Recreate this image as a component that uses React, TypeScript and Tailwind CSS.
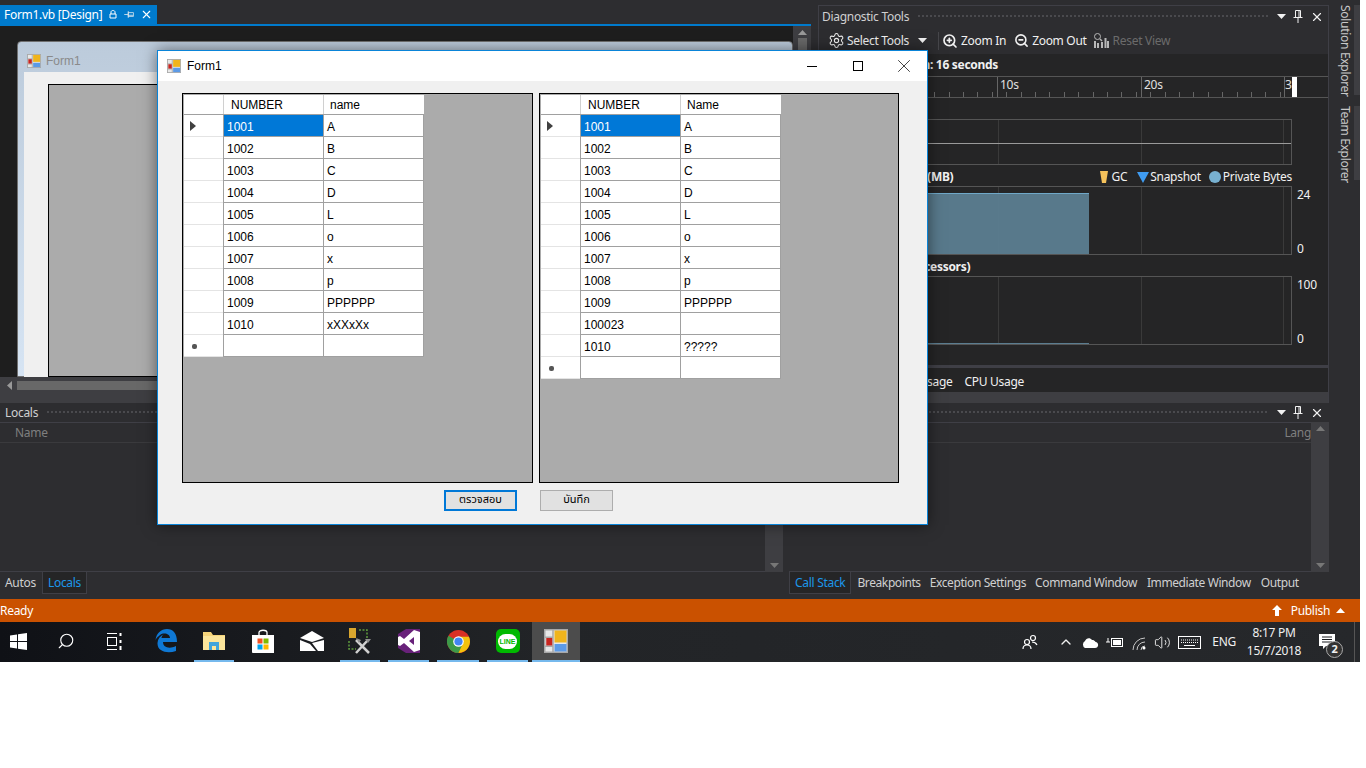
import { ChevronUp, Search, X, Volume2, Settings, ZoomIn, ZoomOut } from "lucide-react";

const FormIcon = ({ size = 16 }: { size?: number }) => (
  <svg width={size} height={size} viewBox="0 0 16 16" className="shrink-0">
    <rect x="0.5" y="0.5" width="15" height="15" fill="#e8e8e8" stroke="#a8a8a8" />
    <path d="M0.5 5.5H6M6 0.5V15.5M0.5 11.5H6" stroke="#a8a8a8" fill="none" />
    <rect x="1.500" y="6" width="4" height="5" fill="#c8251f" />
    <rect x="7" y="1" width="8" height="8" fill="#f0b41c" />
    <rect x="7" y="10" width="8" height="5" fill="#5c9ae6" />
  </svg>
);

const Caret = ({ color = "#f1f1f1" }: { color?: string }) => (
  <svg width="9" height="5" viewBox="0 0 9 5" className="shrink-0">
    <path d="M0 0H9L4.5 5Z" fill={color} />
  </svg>
);

const PinIcon = ({ className = "" }: { className?: string }) => (
  <svg width="10" height="13" viewBox="0 0 10 13" fill="none" stroke="#f1f1f1" className={className}>
    <path d="M2.500 0.500H7.500V7.500H2.500ZM6 1V7M0.500 7.500H9.500M5 8V13" />
  </svg>
);

const PanelButtons = () => (
  <div className="flex items-center gap-[7px] text-[#f1f1f1] shrink-0">
    <Caret />
    <PinIcon />
    <X size={14} strokeWidth={2} />
  </div>
);

const Dots = () => (
  <div className="flex-1 h-[5px] mx-2 bg-[radial-gradient(#4a4a4e_1px,transparent_1px)] bg-[length:4px_4px]" />
);

const left = [
  ["1001", "A"], ["1002", "B"], ["1003", "C"], ["1004", "D"], ["1005", "L"],
  ["1006", "o"], ["1007", "x"], ["1008", "p"], ["1009", "PPPPPP"], ["1010", "xXXxXx"],
];
const right = [
  ["1001", "A"], ["1002", "B"], ["1003", "C"], ["1004", "D"], ["1005", "L"],
  ["1006", "o"], ["1007", "x"], ["1008", "p"], ["1009", "PPPPPP"], ["100023", ""], ["1010", "?????"],
];

const GridRow = ({ a, b, current, isNew }: { a: string; b: string; current?: boolean; isNew?: boolean }) => (
  <div className="flex h-[22px]">
    <div className="w-[39px] flex items-center pl-[6px] border-b border-b-[#e4e4e4] bg-white">
      {current && (
        <svg width="6" height="10" viewBox="0 0 6 10"><path d="M0 0L6 5L0 10Z" fill="#404040" /></svg>
      )}
      {isNew && <span className="ml-[2px] mt-[2px] w-[5px] h-[5px] rounded-[2px] bg-[#555]" />}
    </div>
    <div className={`w-[100px] flex items-center pl-[3px] pt-[2px] border-l border-b border-[#a0a0a0] ${current ? "bg-[#0078d7] text-white" : "bg-white text-black"}`}>
      {a}
    </div>
    <div className="w-[101px] flex items-center pl-[3px] pt-[2px] border-x border-b border-[#a0a0a0] bg-white text-black">
      {b}
    </div>
  </div>
);

const DataGrid = ({ rows, second, width }: { rows: string[][]; second: string; width: string }) => (
  <div className={`${width} h-[390px] border border-black bg-[#ababab] p-px`}>
    <div className="w-[240px]">
      <div className="flex h-[19px]">
        <div className="w-[40px] bg-white border-r border-[#d0d0d0]" />
        <div className="w-[100px] bg-white border-r border-[#d0d0d0] flex items-center pl-[7px] text-black">NUMBER</div>
        <div className="w-[100px] bg-white flex items-center pl-[6px] text-black">{second}</div>
      </div>
      <div className="border-t border-[#a0a0a0]">
        {rows.map((r, i) => (
          <GridRow key={i} a={r[0]} b={r[1]} current={i === 0} />
        ))}
        <GridRow a="" b="" isNew />
      </div>
    </div>
  </div>
);

const Chart = ({ h, children }: { h: string; children?: React.ReactNode }) => (
  <div className={`${h} ml-[8px] w-[465px] border border-[#555] relative flex shrink-0`}>
    <div className="w-[170px]" />
    <div className="w-[143px] border-l border-[#3a3a3a]" />
    <div className="w-[143px] border-x border-[#3a3a3a]" />
    {children}
  </div>
);

const WinLogo = () => (
  <svg width="17" height="17" viewBox="0 0 17 17"><path d="M0 2.5L7 1.5V8H0ZM8 1.3L17 0V8H8ZM0 9H7V15.5L0 14.5ZM8 9H17V17L8 15.7Z" fill="#fff" /></svg>
);
const TaskView = () => (
  <svg width="16" height="17" viewBox="0 0 16 17" fill="none" stroke="#fff">
    <path d="M1 0.5H11M1 16.5H11" />
    <rect x="1.5" y="4.5" width="9" height="8" />
    <path d="M14.5 0V3M14.5 7V10M14.5 13V17" strokeWidth="2" />
  </svg>
);
const EdgeIcon = () => (
  <svg width="22" height="24" viewBox="0 0 22 24">
    <path d="M0.5 11C1.5 4 6 0 12 0C18 0 22 4 22 13H8C8 19 15 20 21 17V22C13 25 2 23 2.5 14C2.7 10 5 7 9 5C7 6.500 6.500 8 6.500 9H15C15 5 9 3 5 6C3 7.500 1.500 9 0.500 11Z" fill="#0f78d4" />
  </svg>
);
const FolderIcon = () => (
  <svg width="22" height="20" viewBox="0 0 22 20">
    <path d="M0 1H8L10 4H22V19H0Z" fill="#f5d47a" />
    <path d="M0 5H22V19H0Z" fill="#fbe59b" />
    <path d="M6 11H16V19H13V15H9V19H6Z" fill="#3fa4dc" />
  </svg>
);
const StoreIcon = () => (
  <svg width="22" height="25" viewBox="0 0 22 25">
    <path d="M7 6V3.500C7 0.500 15 0.500 15 3.500V6" fill="none" stroke="#fff" strokeWidth="1.300" />
    <path d="M0 6H22V24H1C0.500 24 0 23.500 0 23Z" fill="#fff" />
    <rect x="5.500" y="9.500" width="5" height="5" fill="#f25022" />
    <rect x="11.500" y="9.500" width="5" height="5" fill="#7fba00" />
    <rect x="5.500" y="15.500" width="5" height="5" fill="#00a4ef" />
    <rect x="11.500" y="15.500" width="5" height="5" fill="#ffb900" />
  </svg>
);
const MailIcon = () => (
  <svg width="24" height="20" viewBox="0 0 24 20">
    <path d="M12 0L24 7L12 11L0 7Z" fill="#fff" />
    <path d="M0 9L10 13L16 20H0ZM24 9V20H18L12 12Z" fill="#fff" />
  </svg>
);
const ToolsIcon = () => (
  <svg width="24" height="26" viewBox="0 0 24 26">
    <rect x="1" y="0" width="7" height="10" fill="#d9a62e" />
    <path d="M11 2H19V12M1 13V21H8" fill="none" stroke="#5f9a3d" strokeWidth="1.500" strokeDasharray="2 1.500" />
    <path d="M8 12L21 25M20 12L8 25" stroke="#d0d0d0" strokeWidth="2.500" />
    <path d="M8 10L13 12L11 15ZM17 11H23L20 15Z" fill="#909090" />
  </svg>
);
const VsIcon = () => (
  <svg width="22" height="24" viewBox="0 0 22 24">
    <path d="M0 5L8 0H22V24H8L0 19Z" fill="#68217a" />
    <path d="M16 1L22 3V21L16 23L6 14L2 17L0 16V8L2 7L6 10Z" fill="#fff" />
    <path d="M16 8L11 12L16 16Z" fill="#68217a" />
  </svg>
);
const ChromeIcon = () => (
  <svg width="23" height="23" viewBox="0 0 24 24">
    <circle cx="12" cy="12" r="12" fill="#d93025" />
    <path d="M12 12L1.600 6A12 12 0 0 0 12 24L18 13Z" fill="#3c9a48" />
    <path d="M12 7H22.900A12 12 0 0 1 12 24L17 13Z" fill="#f4c20d" />
    <circle cx="12" cy="12" r="5.500" fill="#fff" />
    <circle cx="12" cy="12" r="4.300" fill="#4285f4" />
  </svg>
);
const LineIcon = () => (
  <div className="w-[24px] h-[24px] rounded-[5px] bg-[#00b900] flex items-center justify-center">
    <div className="w-[19px] h-[15px] rounded-full bg-white text-[#00b900] text-[7px] leading-[15px] font-bold text-center font-['Liberation_Sans',sans-serif] tracking-normal">LINE</div>
  </div>
);
const ResetIcon = () => (
  <svg width="16" height="17" viewBox="0 0 16 17" fill="none" stroke="#b8b8b8" className="shrink-0">
    <circle cx="4.500" cy="4.500" r="3" />
    <path d="M7 7L9 9" strokeWidth="1.500" />
    <path d="M2 9V16M5 11V16M9 10V16M12.500 6V16M15 9V16" strokeWidth="2" />
  </svg>
);
const WifiIcon = () => (
  <svg width="15" height="15" viewBox="0 0 15 15" fill="none" stroke="#c8c8c8" className="mr-[8px] -scale-x-100">
    <path d="M1 7A8 8 0 0 1 9 15M1 3A12 12 0 0 1 13 15M1 11A4 4 0 0 1 5 15" />
    <circle cx="2" cy="13" r="1.500" fill="#fff" stroke="none" />
  </svg>
);

const TaskItem = ({ w, children, run, active }: { w: string; children: React.ReactNode; run?: boolean; active?: boolean }) => (
  <div className={`${w} h-full flex flex-col ${active ? "bg-[#4c4c4c]" : ""}`}>
    <div className="flex-1 flex items-center justify-center">{children}</div>
    <div className={`h-[2px] ${active ? "" : "mx-[4px]"} ${run ? "bg-[#76b9ed]" : ""}`} />
  </div>
);

export default function App() {
  return (
    <div className="relative w-[1366px] h-[768px] bg-white overflow-hidden font-['Noto_Sans',sans-serif] text-[12px] tracking-[-0.3px]">
      <div className="w-[1360px] h-[662px] flex flex-col bg-[#2d2d30]">
        <div className="h-[599px] flex">
          <div className="w-[1329px] shrink-0 flex flex-col">
            {/* top half */}
            <div className="h-[403px] flex">
              <div className="w-[811px] shrink-0 flex flex-col">
                <div className="h-[24px] pt-[5px]">
                  <div className="w-[157px] h-[19px] bg-[#007acc] flex items-center pl-1 text-white whitespace-nowrap">
                    <span className="leading-none">Form1.vb [Design]</span>
                    <svg width="8" height="9" viewBox="0 0 8 9" className="ml-[7px]"><path d="M1 4H7V8H1ZM2 4V2C2 0 6 0 6 2V4" fill="none" stroke="#fff" /></svg>
                    <PinIcon className="rotate-90 scale-75 ml-[7px]" />
                    <X size={13} className="ml-[6px]" strokeWidth={2} />
                  </div>
                </div>
                <div className="h-[2px] bg-[#007acc]" />
                <div className="h-[351px] flex bg-[#1e1e1e]">
                  <div className="flex-1 pl-[17px] pt-[15px] overflow-hidden">
                    <div className="h-[336px] rounded-t-[4px] border border-[#707070] bg-[linear-gradient(#bccbdb,#d6e4f3)]">
                      <div className="h-[30px] flex items-center pl-[9px] pt-[8px] gap-[5px] text-[#8a8a8a] font-['Liberation_Sans',sans-serif] text-[12px] tracking-normal">
                        <FormIcon size={14} />Form1
                      </div>
                      <div className="h-[305px] ml-[6px] bg-[#f0f0f0] pl-[24px] pt-[12px]">
                        <div className="h-[293px] border border-black bg-[#ababab]" />
                      </div>
                    </div>
                  </div>
                  <div className="w-[18px] bg-[#3e3e42] flex flex-col items-center pt-[4px] gap-[3px]">
                    <svg width="9" height="5" viewBox="0 0 9 5"><path d="M0 5H9L4.500 0Z" fill="#999" /></svg>
                    <div className="w-[9px] h-[20px] bg-[#686868]" />
                  </div>
                </div>
                <div className="h-[26px] bg-[#3e3e42] flex items-start pt-[4px] pl-[7px] gap-[5px]">
                  <svg width="5" height="9" viewBox="0 0 5 9"><path d="M5 0V9L0 4.500Z" fill="#999" /></svg>
                  <div className="flex-1 h-[9px] bg-[#686868] mr-[40px]" />
                </div>
              </div>
              <div className="w-[7px] shrink-0" />
              <div className="flex-1 min-w-0 flex flex-col border border-[#3f3f46] border-b-0 mt-[5px] bg-[#252526] text-[#f1f1f1]">
                <div className="h-[21px] flex items-center pl-[3px] pr-[4px] text-[#d0d0d0] bg-[#2d2d30]">
                  Diagnostic Tools<Dots /><PanelButtons />
                </div>
                <div className="h-[27px] flex items-center pl-[9px] gap-[3px] bg-[#2d2d30]">
                  <Settings size={17} strokeWidth={1.500} />
                  <span className="-ml-px">Select Tools</span>
                  <span className="ml-[6px]"><Caret /></span>
                  <div className="w-px h-[18px] bg-[#46464a] ml-[8px]" />
                  <ZoomIn size={16} strokeWidth={2.500} /><span className="mr-[5px]">Zoom In</span>
                  <ZoomOut size={15} strokeWidth={2.500} /><span className="mr-[3px]">Zoom Out</span>
                  <ResetIcon /><span className="text-[#6b6b6b] ml-[1px]">Reset View</span>
                </div>
                <div className="h-[22px] flex items-center justify-end pr-[330px] font-bold whitespace-nowrap">
                  Diagnostics session: 16 seconds
                </div>
                <div className="h-[22px] border-y border-[#555] relative flex text-[#e0e0e0]">
                  <div className="w-[179px] border-r border-[#666]" />
                  <div className="w-[144px] border-r border-[#666] pl-[2px] leading-[16px]">10s</div>
                  <div className="w-[143px] border-r border-[#666] pl-[2px] leading-[16px]">20s</div>
                  <div className="w-[7px] overflow-hidden leading-[16px]">3</div>
                  <div className="w-[5px] bg-white" />
                  <div className="absolute left-[0px] w-[466px] bottom-0 h-[5px] bg-[repeating-linear-gradient(90deg,#666_0,#666_1px,transparent_1px,transparent_14.400px)]" />
                </div>
                <div className="h-[21px]" />
                <Chart h="h-[46px]">
                  <div className="absolute left-0 right-0 top-[23px] h-px bg-[#9a9a9a]" />
                </Chart>
                <div className="h-[21px] flex items-center pl-[11px] pt-[3px] w-[473px] shrink-0 whitespace-nowrap">
                  <span className="font-bold">Process Memory (MB)</span>
                  <div className="ml-auto flex items-center gap-[4px]">
                    <svg width="8" height="13" viewBox="0 0 8 13"><path d="M0 0H8L6 12H2Z" fill="#f5c25b" /></svg>
                    <span className="mr-[6px]">GC</span>
                    <svg width="12" height="11" viewBox="0 0 12 11"><path d="M0 0H12L6 11Z" fill="#3f9bf0" /></svg>
                    <span className="mr-[4px] -ml-[3px]">Snapshot</span>
                    <span className="w-[12px] h-[12px] rounded-full bg-[#78b1d1]" />
                    <span className="-ml-[2px]">Private Bytes</span>
                  </div>
                </div>
                <div className="flex">
                  <Chart h="h-[69px]">
                    <div className="absolute left-0 w-[261px] bottom-0 h-[61px] bg-[#5b7d90]/95 border-t border-[#6fa8c8]" />
                  </Chart>
                  <div className="h-[69px] ml-[5px] flex flex-col justify-between leading-[16px] pt-[1px]"><span>24</span><span className="translate-y-[2px]">0</span></div>
                </div>
                <div className="h-[21px] flex items-center pl-[12px] pt-[3px] font-bold whitespace-nowrap">CPU (% of all processors)</div>
                <div className="flex">
                  <Chart h="h-[69px]">
                    <div className="absolute left-0 w-[261px] bottom-0 h-[1px] bg-[#5b7d90]" />
                  </Chart>
                  <div className="h-[69px] ml-[5px] flex flex-col justify-between leading-[16px] pt-[1px]"><span>100</span><span className="translate-y-[2px]">0</span></div>
                </div>
                <div className="h-[20px]" />
                <div className="h-[3px] bg-[#3f3f46]" />
                <div className="h-[24px] flex items-center justify-end pt-[3px] pr-[304px] gap-[12px] whitespace-nowrap bg-[#252526]">
                  <span>Memory Usage</span><span>CPU Usage</span>
                </div>
                <div className="h-[11px] bg-[#3e3e42]" />
              </div>
            </div>
            {/* bottom half */}
            <div className="flex-1 flex">
              <div className="w-[783px] shrink-0 flex flex-col text-[#d0d0d0]">
                <div className="h-[19px] flex items-center pl-[5px]">Locals<Dots /></div>
                <div className="flex-1 flex">
                  <div className="flex-1 border-t border-b border-[#3f3f46]">
                    <div className="h-[20px] pl-[15px] flex items-center border-b border-[#3a3a3d] text-[#7f7f7f]">Name</div>
                  </div>
                  <div className="w-[18px] bg-[#3e3e42] flex flex-col items-center justify-end pb-[4px]">
                    <Caret color="#777" />
                  </div>
                </div>
                <div className="h-[27px] flex items-start pl-[1px]">
                  <span className="h-[20px] mt-[1px] px-[4px] flex items-center">Autos</span>
                  <span className="h-[22px] px-[5px] ml-[2px] flex items-center text-[#1c97ea] bg-[#252526] border border-t-0 border-[#3f3f46]">Locals</span>
                </div>
              </div>
              <div className="w-[6px] shrink-0" />
              <div className="flex-1 min-w-0 flex flex-col text-[#d0d0d0]">
                <div className="h-[19px] flex items-center pl-[5px]">Call Stack<Dots /><span className="mr-[5px]"><PanelButtons /></span></div>
                <div className="flex-1 flex">
                  <div className="flex-1 border-t border-b border-[#3f3f46]">
                    <div className="h-[20px] flex items-center justify-end border-b border-[#3a3a3d] text-[#7f7f7f]">Lang</div>
                  </div>
                  <div className="w-[18px] bg-[#3e3e42] flex flex-col items-center justify-between py-[4px]">
                    <svg width="9" height="5" viewBox="0 0 9 5"><path d="M0 5H9L4.500 0Z" fill="#777" /></svg>
                    <Caret color="#777" />
                  </div>
                </div>
                <div className="h-[27px] flex items-start gap-[10px] whitespace-nowrap tracking-[-0.4px]">
                  <span className="h-[22px] px-[5px] flex items-center text-[#1c97ea] bg-[#252526] border border-t-0 border-[#3f3f46] tracking-[-0.3px]">Call Stack</span>
                  <span className="h-[20px] mt-[1px] -ml-[4px] flex items-center">Breakpoints</span>
                  <span className="h-[20px] mt-[1px] -ml-[1px] flex items-center">Exception Settings</span>
                  <span className="h-[20px] mt-[1px] -ml-[1px] flex items-center">Command Window</span>
                  <span className="h-[20px] mt-[1px] flex items-center">Immediate Window</span>
                  <span className="h-[20px] mt-[1px] flex items-center">Output</span>
                </div>
              </div>
            </div>
          </div>
          <div className="flex-1 flex gap-[11px] flex-col pt-[5px] text-[#c8c8c8] whitespace-nowrap">
            <div className="h-[90px] flex justify-between pl-[7px]">
              <span className="[writing-mode:vertical-rl]">Solution Explorer</span>
              <div className="w-[6px] bg-[#3e3e42]" />
            </div>
            <div className="h-[74px] flex justify-between pl-[7px]">
              <span className="[writing-mode:vertical-rl]">Team Explorer</span>
              <div className="w-[6px] bg-[#3e3e42]" />
            </div>
          </div>
        </div>
        <div className="h-[23px] bg-[#ca5100] text-white flex items-center justify-between pr-[15px]">
          <span>Ready</span>
          <div className="flex items-center gap-[6px]">
            <svg width="10" height="11" viewBox="0 0 10 11"><path d="M5 0L10 5H7V11H3V5H0Z" fill="#fff" /></svg>
            <span className="ml-[3px]">Publish</span>
            <svg width="9" height="5" viewBox="0 0 9 5"><path d="M0 5H9L4.500 0Z" fill="#fff" /></svg>
          </div>
        </div>
        <div className="h-[40px] bg-[linear-gradient(90deg,#0f1116,#222427_40%,#26282b)] flex items-center text-white">
          <TaskItem w="w-[36px]"><WinLogo /></TaskItem>
          <TaskItem w="w-[60px]"><Search size={18} strokeWidth={1.500} className="-scale-x-100" /></TaskItem>
          <TaskItem w="w-[36px]"><TaskView /></TaskItem>
          <div className="w-[10px]" />
          <TaskItem w="w-[48px]"><EdgeIcon /></TaskItem>
          <TaskItem w="w-[48px]" run><FolderIcon /></TaskItem>
          <TaskItem w="w-[49px]"><StoreIcon /></TaskItem>
          <TaskItem w="w-[49px]"><MailIcon /></TaskItem>
          <TaskItem w="w-[48px]" run><ToolsIcon /></TaskItem>
          <TaskItem w="w-[49px]" run><VsIcon /></TaskItem>
          <TaskItem w="w-[50px]" run><ChromeIcon /></TaskItem>
          <TaskItem w="w-[49px]" run><LineIcon /></TaskItem>
          <TaskItem w="w-[48px]" run active><FormIcon size={24} /></TaskItem>
          <div className="flex-1 flex items-center justify-end text-[#f0f0f0] h-full">
            <svg width="16" height="16" viewBox="0 0 16 16" fill="none" stroke="#fff" strokeWidth="1.200" className="mr-[20px]">
              <circle cx="11" cy="4" r="2.500" /><circle cx="5" cy="8" r="2.500" /><path d="M1 15C1 12 3 11 5 11S9 12 9 15M10 8C12 8 14 9 15 11" />
            </svg>
            <ChevronUp size={16} className="mr-[7px]" />
            <svg width="18" height="11" viewBox="0 0 18 11" className="mr-[7px]"><path d="M4 11A4 4 0 0 1 4 4C5 1 9 0 11 3C14 3 14 5 15 5C18 6 18 11 14 11Z" fill="#fff" /></svg>
            <svg width="17" height="11" viewBox="0 0 17 11" fill="none" stroke="#fff" className="mr-[8px]"><rect x="5.500" y="1.500" width="11" height="8" /><rect x="7" y="3" width="8" height="5" fill="#fff" stroke="none" /><path d="M0 5H4M2 1V5" /></svg>
            <WifiIcon />
            <Volume2 size={17} strokeWidth={1.300} className="mr-[7px]" />
            <svg width="23" height="13" viewBox="0 0 23 13" fill="none" stroke="#fff" className="mr-[11px]"><rect x="0.500" y="0.500" width="22" height="12" /><path d="M3 4H20M3 6.500H20" strokeDasharray="1 1" /><path d="M6 9.500H17" /></svg>
            <span className="mr-[12px]">ENG</span>
            <div className="flex flex-col items-center leading-[18px] mr-[19px] w-[52px] text-[12px]">
              <span>8:17 PM</span><span>15/7/2018</span>
            </div>
            <div className="w-[36px] h-full relative mr-[5px] flex items-center border-r border-[#555]">
              <svg width="16" height="16" viewBox="0 0 16 16"><path d="M0 0H16V12H7L4 15V12H0Z" fill="#fff" /><path d="M3 3H13M3 5.500H13M3 8H13" stroke="#1b1d20" /></svg>
              <span className="absolute left-[7px] top-[19px] w-[17px] h-[17px] rounded-full bg-[#333] border border-[#aaa] text-[11px] flex items-center justify-center font-bold">2</span>
            </div>
          </div>
        </div>
      </div>

      {/* running Form1 window over the IDE */}
      <div className="absolute left-[157px] top-[50px] w-[771px] h-[475px] bg-[#f0f0f0] border border-[#0a84d8] font-['Liberation_Sans',sans-serif] text-[12px] tracking-normal flex flex-col shadow-[0_0_14px_rgba(0,0,0,0.5)]">
        <div className="h-[30px] bg-white flex items-center pl-[9px] text-black">
          <FormIcon size={14} />
          <span className="ml-[6px]">Form1</span>
          <div className="ml-auto flex items-center">
            <div className="w-[46px] flex justify-center"><div className="w-[10px] h-px bg-black" /></div>
            <div className="w-[46px] flex justify-center"><div className="w-[10px] h-[10px] border border-black" /></div>
            <div className="w-[46px] flex justify-center"><X size={22} strokeWidth={0.800} className="text-black" /></div>
          </div>
        </div>
        <div className="flex gap-[6px] pl-[24px] pt-[12px]">
          <DataGrid rows={left} second="name" width="w-[351px]" />
          <DataGrid rows={right} second="Name" width="w-[360px]" />
        </div>
        <div className="flex justify-center gap-[23px] pt-[7px] pr-[28px] font-['Noto_Sans_Thai','Noto_Sans','DejaVu_Sans',sans-serif] text-[11px]">
          <button className="w-[73px] h-[21px] bg-[#e1e1e1] border-2 border-[#0078d7] text-black">ตรวจสอบ</button>
          <button className="w-[73px] h-[21px] bg-[#e1e1e1] border border-[#adadad] text-black">บันทึก</button>
        </div>
      </div>
    </div>
  );
}
